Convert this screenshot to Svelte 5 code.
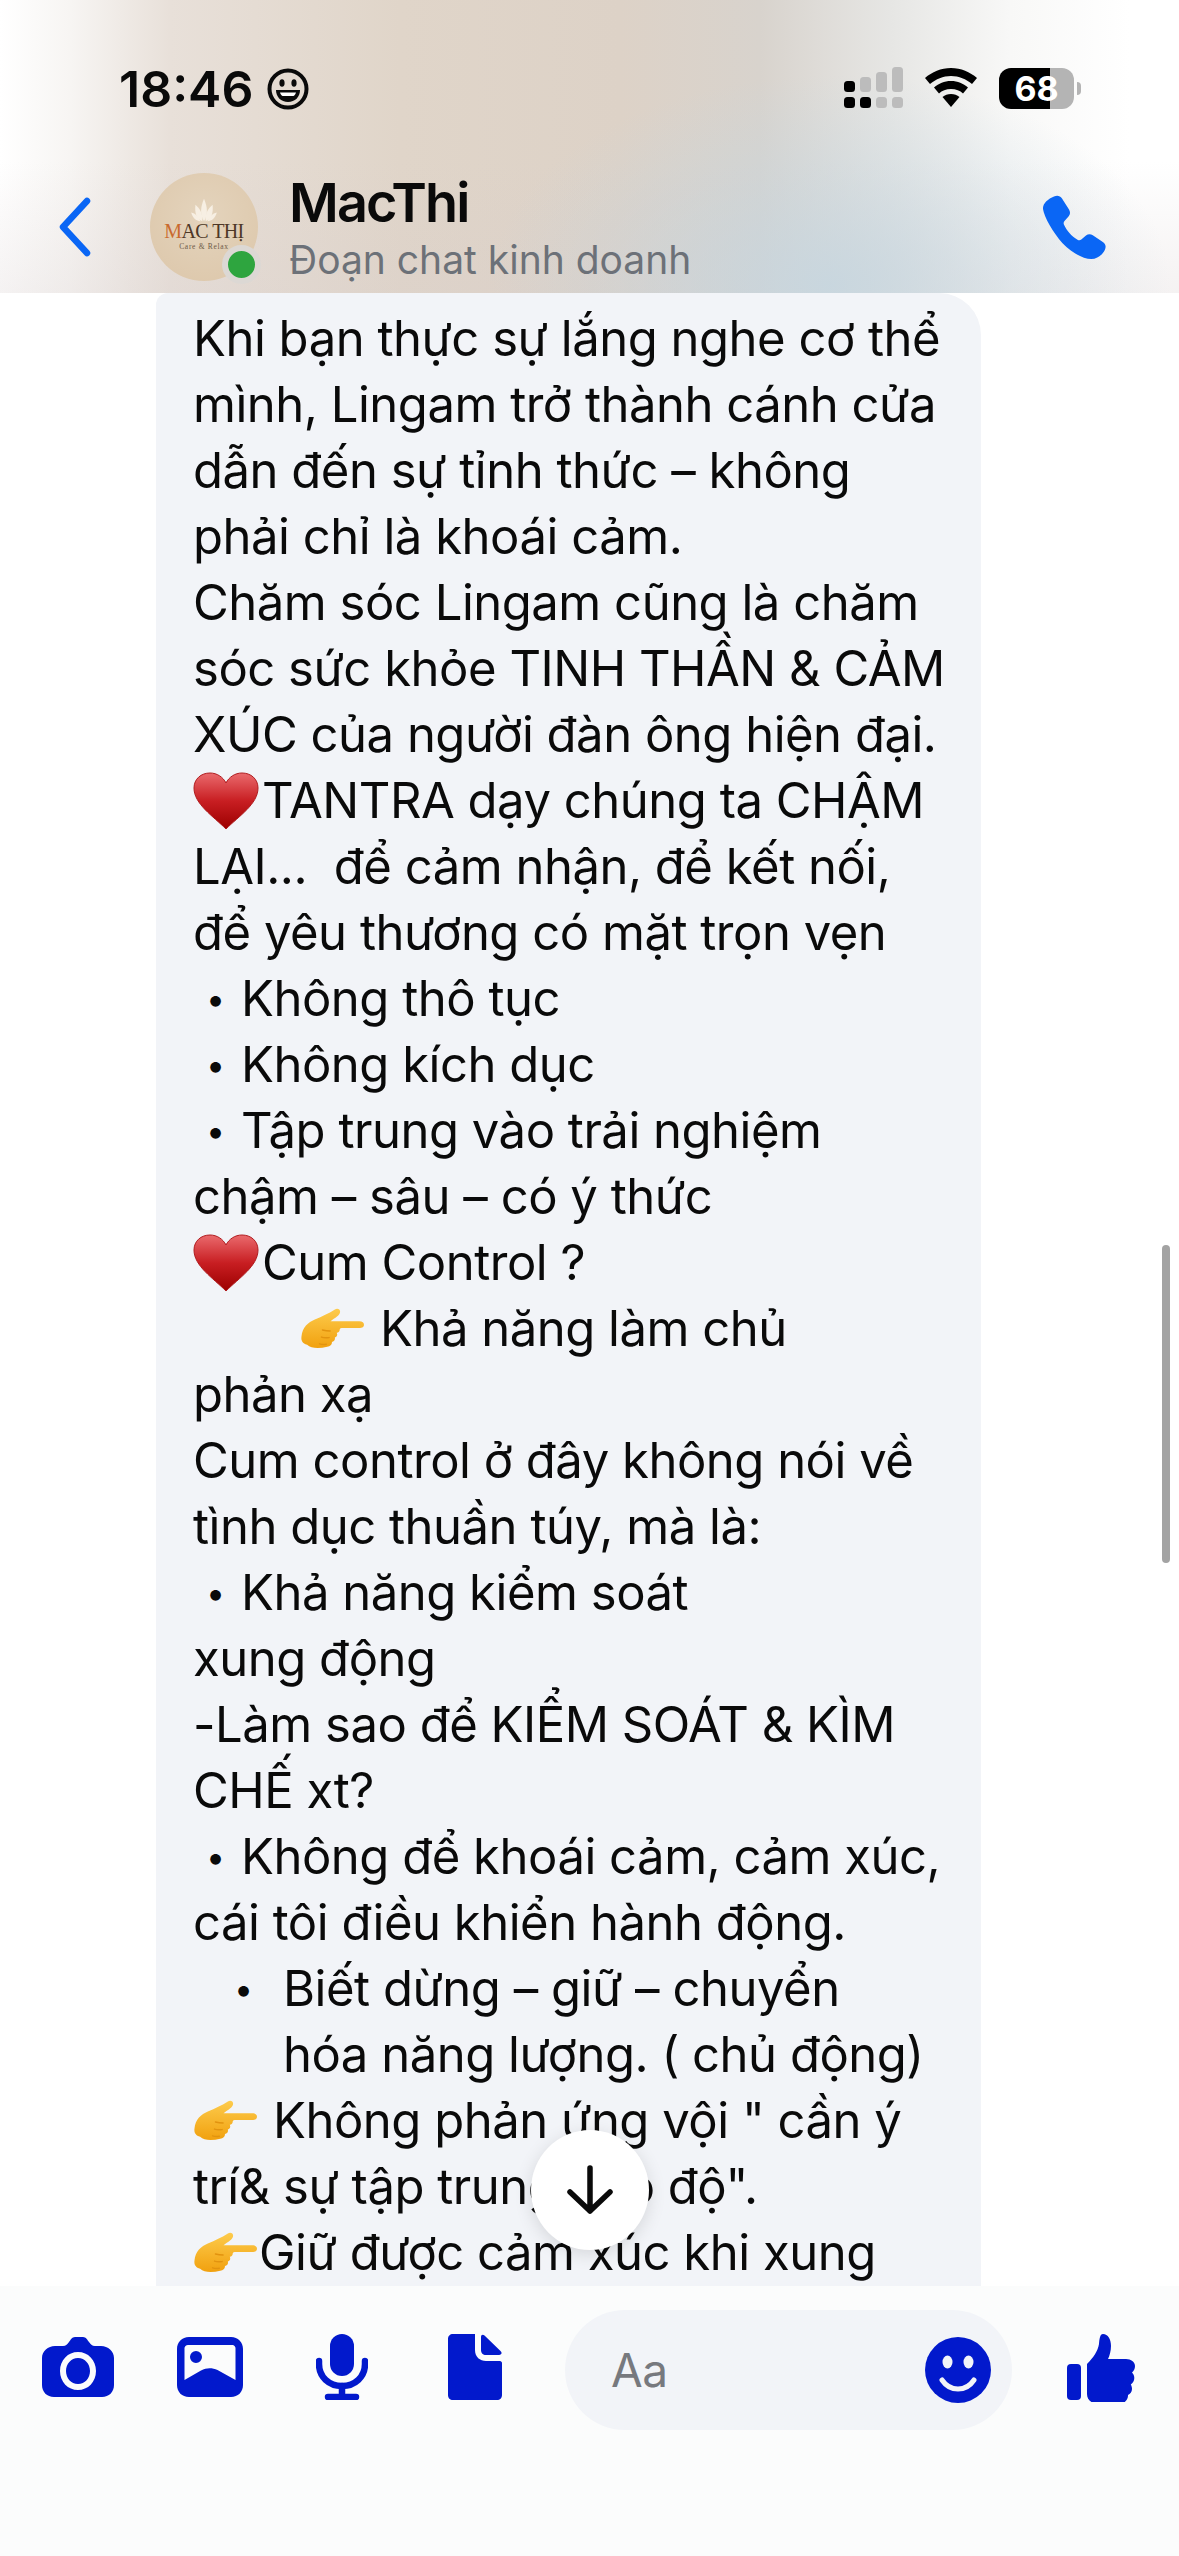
<script>
	const lines = [
		{ t: 'Khi bạn thực sự lắng nghe cơ thể' },
		{ t: 'mình, Lingam trở thành cánh cửa' },
		{ t: 'dẫn đến sự tỉnh thức – không' },
		{ t: 'phải chỉ là khoái cảm.' },
		{ t: 'Chăm sóc Lingam cũng là chăm' },
		{ t: 'sóc sức khỏe TINH THẦN & CẢM' },
		{ t: 'XÚC của người đàn ông hiện đại.' },
		{ t: 'TANTRA dạy chúng ta CHẬM', emoji: 'heart' },
		{ t: 'LẠI...  để cảm nhận, để kết nối,' },
		{ t: 'để yêu thương có mặt trọn vẹn' },
		{ t: 'Không thô tục', kind: 'bullet' },
		{ t: 'Không kích dục', kind: 'bullet' },
		{ t: 'Tập trung vào trải nghiệm', kind: 'bullet' },
		{ t: 'chậm – sâu – có ý thức' },
		{ t: 'Cum Control ?', emoji: 'heart' },
		{ t: 'Khả năng làm chủ', emoji: 'hand', kind: 'indent' },
		{ t: 'phản xạ' },
		{ t: 'Cum control ở đây không nói về' },
		{ t: 'tình dục thuần túy, mà là:' },
		{ t: 'Khả năng kiểm soát', kind: 'bullet' },
		{ t: 'xung động' },
		{ t: '-Làm sao để KIỂM SOÁT & KÌM' },
		{ t: 'CHẾ xt?' },
		{ t: 'Không để khoái cảm, cảm xúc,', kind: 'bullet' },
		{ t: 'cái tôi điều khiển hành động.' },
		{ t: 'Biết dừng – giữ – chuyển', kind: 'sub' },
		{ t: 'hóa năng lượng. ( chủ động)', kind: 'cont' },
		{ t: 'Không phản ứng vội " cần ý', emoji: 'hand', kind: 'spaced' },
		{ t: 'trí& sự tập trung cao độ".' },
		{ t: 'Giữ được cảm xúc khi xung', emoji: 'hand' }
	]
</script>

<div class="screen">
	<header class="top">
		<div class="status">
			<div class="clock">
				<span>18:46</span>
				<svg width="42" height="42" viewBox="0 0 42 42">
					<circle cx="21" cy="21" r="18.5" fill="none" stroke="#0a0a0a" stroke-width="4" />
					<ellipse cx="15" cy="15" rx="2.6" ry="3.8" fill="#0a0a0a" />
					<ellipse cx="27" cy="15" rx="2.6" ry="3.8" fill="#0a0a0a" />
					<path d="M9 22h24c0 7-5 12-12 12S9 29 9 22z" fill="#0a0a0a" />
					<path d="M13 24.500h16c-.6 2-1.500 3-2.500 3.500h-11c-1-.5-2-1.500-2.500-3.500z" fill="#fff" />
				</svg>
			</div>
			<div class="sys">
				<svg width="60" height="42" viewBox="0 0 60 42">
					<rect x="0" y="14" width="11" height="11" rx="3.500" fill="#000" />
					<rect x="16" y="10" width="11" height="15" rx="3.500" fill="#bcbcbc" />
					<rect x="32" y="5" width="11" height="20" rx="3.500" fill="#bcbcbc" />
					<rect x="48" y="0" width="11" height="25" rx="3.500" fill="#bcbcbc" />
					<rect x="0" y="30" width="11" height="11" rx="3.500" fill="#000" />
					<rect x="16" y="30" width="11" height="11" rx="3.500" fill="#000" />
					<rect x="32" y="30" width="11" height="11" rx="3.500" fill="#bcbcbc" />
					<rect x="48" y="30" width="11" height="11" rx="3.500" fill="#bcbcbc" />
				</svg>
				<svg class="wifi" width="52" height="40" viewBox="0 0 52 40">
					<path d="M26 0c10 0 19 4 26 10l-5 6C41 11 34 8 26 8S11 11 5 16l-5-6C7 4 16 0 26 0z" fill="#000" />
					<path d="M26 13c7 0 12 2.500 17 6.500l-5 6c-3-3-7-4.500-12-4.500s-9 1.500-12 4.500l-5-6c5-4 10-6.500 17-6.500z" fill="#000" />
					<path d="M26 26c3.500 0 6 1 8.500 3L26 39l-8.500-10c2.500-2 5-3 8.500-3z" fill="#000" />
				</svg>
				<div class="battery"><span>68</span></div>
				<div class="nub"></div>
			</div>
		</div>
		<div class="conv">
			<svg class="back" width="34" height="60" viewBox="0 0 34 60">
				<path d="M29 4 5 30l24 26" fill="none" stroke="#0a66f5" stroke-width="6.500" stroke-linecap="round" stroke-linejoin="round" />
			</svg>
			<div class="avatar">
				<svg class="lotus" width="28" height="24" viewBox="0 0 30 28">
					<path d="M15 27C10 20 11 10 15 1c4 9 5 19 0 26z" fill="#f7efe3" />
					<path d="M13 27C6 24 4 18 5 8c5 4 9 11 8 19zM17 27c7-3 9-9 8-19-5 4-9 11-8 19z" fill="#f7efe3" />
					<path d="M11 27C6 27 2 24 0 17c5 1 9 5 11 10zM19 27c5 0 9-3 11-10-5 1-9 5-11 10z" fill="#f7efe3" />
				</svg>
				<div class="logo"><em>M</em>AC THỊ</div>
				<div class="care">Care &amp; Relax</div>
				<div class="online"></div>
			</div>
			<div class="who">
				<div class="name">MacThi</div>
				<div class="kind">Đoạn chat kinh doanh</div>
			</div>
			<svg class="call" width="66" height="66" viewBox="0 0 66 66">
				<path d="M13 1.500c3-1.500 6-1 8 2l7 11c1.500 2.500 1.300 5-.5 7l-4 4.500c-1 1.200-1.100 2.300-.5 3.800 2.500 5.500 7.500 11.500 13.500 15 1.500.8 2.700.7 3.800-.3l4.700-4c2-1.700 4.500-1.800 6.800-.3l10 6.800c3 2 3.500 5 2 8-2.500 5-7.500 9-13.500 9-8.500 0-20-6.500-29-16C12.500 38 3 22 2 14 1.500 8.500 7 4 13 1.500z" fill="#0a66f5" />
			</svg>
		</div>
	</header>

	<main class="chat">
		<div class="bubble">
			{#each lines as l}
				<div class="line {l.kind ?? ''}">
					{#if l.kind === 'bullet' || l.kind === 'sub'}<span class="dot">•</span>{/if}
					{#if l.emoji === 'heart'}
						<svg class="heart" width="66" height="58" viewBox="0 0 66 58">
							<defs>
								<linearGradient id="hg" x1="0" y1="0" x2="0" y2="1">
									<stop offset="0" stop-color="#ea6a6d" />
									<stop offset="0.5" stop-color="#c81e22" />
									<stop offset="1" stop-color="#9c0000" />
								</linearGradient>
							</defs>
							<path d="M33 57C20 44 1 32 1 16 1 7 8 1 17 1c7 0 13 4 16 10C36 5 42 1 49 1c9 0 16 6 16 15 0 16-19 28-32 41z" fill="url(#hg)" stroke="#b01c1f" stroke-width="1" />
						</svg>
					{:else if l.emoji === 'hand'}
						<svg class="hand" width="64" height="42" viewBox="0 0 66 44">
							<defs>
								<linearGradient id="fg" x1="0" y1="0" x2="0" y2="1">
									<stop offset="0" stop-color="#fdcb4c" />
									<stop offset="1" stop-color="#f1a10f" />
								</linearGradient>
							</defs>
							<path d="M1 30C2 20 8 15 15 12 23 8.500 29 6 36 1.500c3-1.500 5.500 0 5.500 2.500 0 3-3.500 5.500-7 7.500l-3 2.500h30c3.500 0 5 1.500 5 3.500s-1.500 3.500-5.500 3.500H43c-1 0-2 .8-2 2 0 1.500-1 2.500-3 3 1 2 .5 4-2 5 .5 2.500-.5 4-3 4.500 0 3-2 4.500-5 5-8 2-17 2-21-2C2 37 .5 34 1 30z" fill="url(#fg)" />
							<path d="M31 24c-4 0-6-.5-8-1M30 31c-4 .5-6 .3-8-.5M27 38c-3 .5-5 .3-7-.5" fill="none" stroke="#e2930f" stroke-width="1.500" stroke-linecap="round" />
						</svg>
					{/if}
					<span>{l.t}</span>
				</div>
			{/each}
		</div>
	</main>

	<footer class="composer">
		<svg width="72" height="60" viewBox="0 0 72 60">
			<path fill-rule="evenodd" d="M13 9h8c3 0 4.500-2 6-4 1.500-2 3-5 6-5h8c3 0 4.500 3 6 5 1.500 2 3 4 6 4h6c7 0 13 5 13 12v27c0 7-5 12-12 12H12C5 60 0 55 0 48V21C0 14 6 9 13 9zM36 15c-10 0-18 8-18 19s8 19 18 19 18-8 18-19-8-19-18-19zm0 6c7 0 12 6 12 13s-5 13-12 13-12-6-12-13 5-13 12-13z" fill="#0219cc" />
		</svg>
		<svg width="66" height="60" viewBox="0 0 66 60">
			<path fill-rule="evenodd" d="M12 0h42c7 0 12 5 12 12v36c0 7-5 12-12 12H12C5 60 0 55 0 48V12C0 5 5 0 12 0zm10 8H11C9 8 7.500 9.500 7.500 11v32L24 33.500c5.500-3 11-3 16.500-.5L58.500 43V11c0-1.500-1.500-3-3-3zM19 14a6 6 0 1 1 0 12 6 6 0 0 1 0-12z" fill="#0219cc" />
		</svg>
		<svg width="52" height="66" viewBox="0 0 52 66">
			<rect x="14" y="0" width="24" height="42" rx="12" fill="#0219cc" />
			<path d="M3 27v3c0 13 10 22 23 22s23-9 23-22v-3" fill="none" stroke="#0219cc" stroke-width="6.500" stroke-linecap="round" />
			<path d="M26 52v10M12 63h28" fill="none" stroke="#0219cc" stroke-width="6.500" stroke-linecap="round" />
		</svg>
		<svg width="54" height="66" viewBox="0 0 54 66">
			<path d="M5 0h22v16c0 7 5 11 11 11h14c1 0 2 1 2 2v32c0 3-2 5-5 5H5c-3 0-5-2-5-5V5c0-3 2-5 5-5z" fill="#0219cc" />
			<path d="M33 3c0-2.500 2-3 3.500-1.500L52.500 17c2 2 1 4-1.500 4H38c-3 0-5-2-5-5z" fill="#0219cc" />
		</svg>
		<div class="input">
			<span>Aa</span>
			<svg width="66" height="66" viewBox="0 0 66 66">
				<circle cx="33" cy="33" r="33" fill="#0219cc" />
				<ellipse cx="22.500" cy="25" rx="5" ry="6.500" fill="#f2f4f8" />
				<ellipse cx="43.500" cy="25" rx="5" ry="6.500" fill="#f2f4f8" />
				<path d="M17 43c4 6 10 9 16 9s12-3 16-9" fill="none" stroke="#f2f4f8" stroke-width="5" stroke-linecap="round" />
			</svg>
		</div>
		<svg width="68" height="68" viewBox="0 0 68 68">
			<rect x="0" y="30" width="14" height="36" rx="4" fill="#0219cc" />
			<path d="M20 30c6-6 11-13 12-20 .4-5 1-10 4-10 5 0 8 5 8 12 0 5-1.500 10-3 13h18c5 0 9 3 9 7 0 3-1.200 5-3 6.500 1.500 1.500 2.300 3.500 2.300 5.500 0 3-1.500 5-3.500 6.500.8 1.300 1.200 3 1.200 4.500 0 3-1.800 5-4 6 .3 4-3 9-9 9H32c-7 0-12-4-12-10z" fill="#0219cc" />
		</svg>
	</footer>

	<button class="down" aria-label="Xuống cuối">
		<svg width="46" height="50" viewBox="0 0 46 50">
			<path d="M23 3v43M3 27l20 19 20-19" fill="none" stroke="#0a0a0a" stroke-width="5.500" stroke-linecap="round" stroke-linejoin="round" />
		</svg>
	</button>
	<div class="scrollbar"></div>
</div>

<style>
	:global(body) {
		margin: 0;
		background: #fff;
	}

	.screen {
		position: relative;
		width: 1179px;
		height: 2556px;
		display: flex;
		flex-direction: column;
		overflow: hidden;
		background: #fff;
		font-family: Inter, 'Noto Sans', sans-serif;
		color: #0a0a0a;
	}

	.top {
		height: 293px;
		flex: none;
		box-sizing: border-box;
		background:
			radial-gradient(ellipse 340px 210px at 830px 285px, rgba(197, 214, 224, 0.85), rgba(197, 214, 224, 0)),
			linear-gradient(180deg, rgba(255, 255, 255, 0) 55%, rgba(214, 204, 204, 0.25) 100%),
			linear-gradient(90deg, #fff 0, #f7f5f3 70px, #e8e0d9 170px, #e0d5c9 400px, #ddd2c7 620px, #d8d3cd 760px, #e6e6e4 890px, #f8f8f7 1010px, #fff 1130px);
	}

	.status {
		height: 160px;
		box-sizing: border-box;
		padding: 59px 98px 0 119px;
		display: flex;
		justify-content: space-between;
		align-items: flex-start;
	}

	.clock {
		display: flex;
		align-items: center;
		gap: 14px;
		font-size: 50px;
		font-weight: 600;
		line-height: 60px;
	}

	.sys {
		display: flex;
		align-items: center;
		margin-top: 8px;
	}

	.wifi {
		margin-left: 21px;
		margin-right: 22px;
	}

	.battery {
		width: 75px;
		height: 41px;
		border-radius: 12px;
		background: linear-gradient(90deg, #000 51px, #b4b4b4 51px);
		color: #fff;
		font-size: 34px;
		font-weight: 700;
		line-height: 41px;
		text-align: center;
	}

	.nub {
		width: 4px;
		height: 13px;
		margin-left: 3px;
		border-radius: 0 4px 4px 0;
		background: #b4b4b4;
	}

	.conv {
		position: relative;
		display: flex;
		align-items: flex-start;
		padding-left: 58px;
		padding-top: 13px;
	}

	.back {
		margin-top: 24px;
	}

	.avatar {
		position: relative;
		width: 108px;
		height: 108px;
		margin-left: 58px;
		border-radius: 50%;
		background: radial-gradient(circle at 50% 40%, #e4d4bd, #dcc6a9);
		display: flex;
		flex-direction: column;
		align-items: center;
		padding-top: 25px;
		box-sizing: border-box;
		flex: none;
	}

	.logo {
		font-family: 'Liberation Serif', serif;
		font-size: 20px;
		line-height: 17px;
		color: #4d3726;
		margin-top: 1px;
		white-space: nowrap;
		letter-spacing: -0.6px;
	}

	.logo em {
		font-style: normal;
		color: #c96a2e;
	}

	.care {
		font-family: 'Liberation Serif', serif;
		font-size: 7.500px;
		line-height: 10px;
		color: #6d5a48;
		letter-spacing: 0.7px;
		margin-top: 2px;
	}

	.online {
		position: absolute;
		left: 72px;
		top: 72px;
		width: 27px;
		height: 27px;
		border-radius: 50%;
		background: #2ea53f;
		border: 6px solid #dcd8d4;
	}

	.who {
		margin-left: 31px;
	}

	.name {
		font-size: 54px;
		font-weight: 600;
		line-height: 60px;
		letter-spacing: -1.9px;
		color: #0a0a0a;
	}

	.kind {
		font-size: 39px;
		line-height: 46px;
		margin-top: 4px;
		color: #6c7178;
	}

	.call {
		position: absolute;
		left: 1041px;
		top: 35px;
	}

	.chat {
		flex: 1;
		min-height: 0;
		overflow: hidden;
	}

	.bubble {
		width: 825px;
		box-sizing: border-box;
		margin-left: 156px;
		padding: 13px 0 0 37px;
		background: #f2f4f8;
		border-radius: 12px 42px 0 0;
		height: 100%;
		overflow: hidden;
	}

	.line {
		height: 66px;
		font-size: 49px;
		line-height: 66px;
		letter-spacing: -0.48px;
		white-space: pre;
		display: flex;
		align-items: center;
	}

	.bullet {
		padding-left: 15px;
	}

	.dot {
		width: 33px;
		flex: none;
		font-size: 34px;
	}

	.bullet .dot {
		margin-left: -2px;
		margin-right: 2px;
	}

	.sub {
		padding-left: 41px;
	}

	.sub .dot {
		width: 49px;
	}

	.cont {
		padding-left: 90px;
	}

	.indent {
		padding-left: 107px;
	}

	.indent .hand,
	.spaced .hand {
		margin-right: 16px;
	}

	.heart {
		flex: none;
		margin-right: 3px;
	}

	.hand {
		flex: none;
		margin-right: 2px;
	}

	.composer {
		height: 270px;
		flex: none;
		box-sizing: border-box;
		background: #fbfcfc;
		position: relative;
		display: flex;
		align-items: flex-start;
		padding: 24px 0 0 42px;
		gap: 0;
	}

	.composer > svg {
		flex: none;
		margin-top: 27px;
	}

	.composer > svg:nth-child(2) {
		margin-left: 63px;
	}

	.composer > svg:nth-child(3) {
		margin-left: 73px;
		margin-top: 24px;
	}

	.composer > svg:nth-child(4) {
		margin-left: 80px;
		margin-top: 24px;
	}

	.composer > svg:nth-child(6) {
		margin-left: 55px;
		margin-top: 24px;
	}

	.input {
		width: 447px;
		height: 120px;
		margin-left: 63px;
		flex: none;
		box-sizing: border-box;
		border-radius: 60px;
		background: #f2f4f8;
		display: flex;
		align-items: center;
		justify-content: space-between;
		padding: 0 21px 0 46px;
		font-size: 46px;
		letter-spacing: -0.5px;
		color: #77797e;
	}

	.down {
		position: absolute;
		left: 531px;
		top: 2130px;
		width: 118px;
		height: 120px;
		padding: 0;
		border: none;
		border-radius: 50%;
		background: #fff;
		box-shadow: 0 4px 18px rgba(0, 0, 0, 0.12);
		display: flex;
		align-items: center;
		justify-content: center;
	}

	.scrollbar {
		position: absolute;
		left: 1162px;
		top: 1245px;
		width: 8px;
		height: 318px;
		border-radius: 4px;
		background: #a3a3a3;
	}
</style>
